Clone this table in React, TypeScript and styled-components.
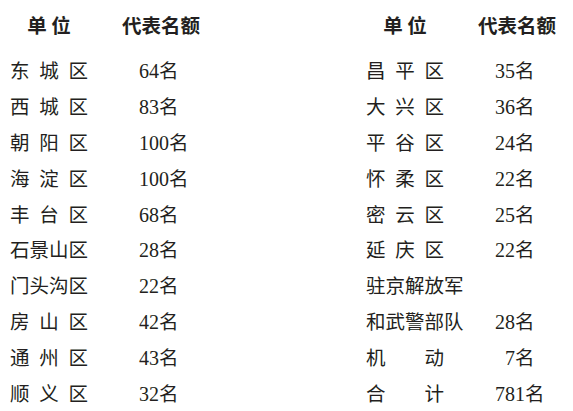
import React from "react";
import styled, { createGlobalStyle } from "styled-components";

type Entry = { name: string; count?: string; pad?: boolean };

const leftRows: Entry[] = [
  { name: "东城区", count: "64" },
  { name: "西城区", count: "83" },
  { name: "朝阳区", count: "100" },
  { name: "海淀区", count: "100" },
  { name: "丰台区", count: "68" },
  { name: "石景山区", count: "28" },
  { name: "门头沟区", count: "22" },
  { name: "房山区", count: "42" },
  { name: "通州区", count: "43" },
  { name: "顺义区", count: "32" },
];

const rightRows: Entry[] = [
  { name: "昌平区", count: "35" },
  { name: "大兴区", count: "36" },
  { name: "平谷区", count: "24" },
  { name: "怀柔区", count: "22" },
  { name: "密云区", count: "25" },
  { name: "延庆区", count: "22" },
  { name: "驻京解放军" },
  { name: "和武警部队", count: "28" },
  { name: "机动", count: "7", pad: true },
  { name: "合计", count: "781" },
];

const GlobalStyle = createGlobalStyle`
  html, body {
    margin: 0;
    padding: 0;
    background: #ffffff;
  }
  body {
    font-family: "Liberation Serif", "Noto Sans CJK SC", serif;
    color: #231f20;
  }
`;

const Page = styled.div`
  display: flex;
  gap: 166px;
  padding: 7px 0 0 10px;
  width: 573px;
  height: 411px;
  box-sizing: border-box;
`;

const Table = styled.div`
  display: grid;
  grid-template-columns: 78px 78px;
  grid-template-rows: 45px repeat(10, 35.8px);
  column-gap: 34px;
  align-items: center;
`;

const HeadCell = styled.div`
  font-family: "Noto Sans CJK SC", sans-serif;
  font-weight: 700;
  font-size: 19.5px;
  line-height: 36px;
  text-align: center;
  white-space: nowrap;
  align-self: start;
`;

const Name = styled.div`
  display: flex;
  justify-content: space-between;
  font-family: "Noto Sans CJK SC", sans-serif;
  font-weight: 400;
  font-size: 19.5px;
  white-space: nowrap;
`;

const Count = styled.div<{ $pad?: boolean }>`
  font-size: 20px;
  white-space: nowrap;
  padding-left: ${(p) => (p.$pad ? "27px" : "17px")};
`;

const Unit = styled.span`
  font-family: "Noto Sans CJK SC", sans-serif;
  font-size: 19.5px;
`;

function Block({ rows }: { rows: Entry[] }) {
  return (
    <Table>
      <HeadCell>单 位</HeadCell>
      <HeadCell>代表名额</HeadCell>
      {rows.map((r, i) => (
        <React.Fragment key={i}>
          <Name>
            {r.name.split("").map((c, j) => (
              <span key={j}>{c}</span>
            ))}
          </Name>
          <Count $pad={r.pad}>
            {r.count && (
              <>
                {r.count}
                <Unit>名</Unit>
              </>
            )}
          </Count>
        </React.Fragment>
      ))}
    </Table>
  );
}

export default function App() {
  return (
    <>
      <GlobalStyle />
      <Page>
        <Block rows={leftRows} />
        <Block rows={rightRows} />
      </Page>
    </>
  );
}
